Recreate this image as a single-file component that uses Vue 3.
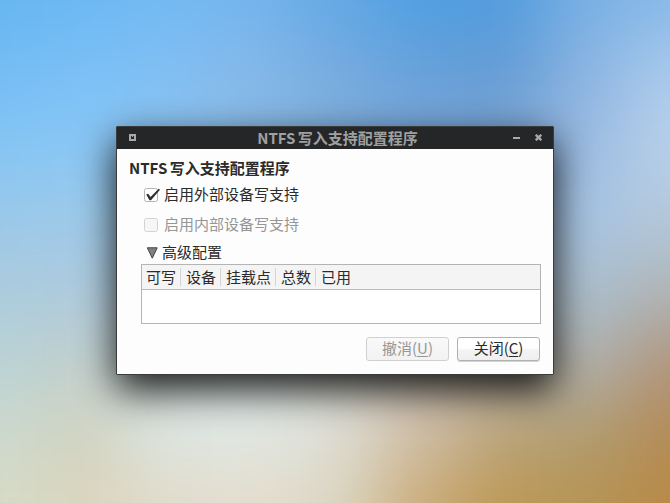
<script setup>
import { ref } from 'vue'

const external = ref(true)
const title = 'NTFS 写入支持配置程序'
const columns = ['可写', '设备', '挂载点', '总数', '已用']

// Wallpaper colour samples, blended together with a wide blur
const mesh = [
  ['#66b5f1', '#6cb8f3', '#72b9f3', '#74b4ec', '#64a8e5', '#4f9fe2', '#529cde', '#78b0e4', '#88b9e8'],
  ['#74bdf5', '#7bc0f7', '#82bff3', '#85b9ea', '#78acdf', '#68a1da', '#659cd4', '#8db5e2', '#accbed'],
  ['#84c5f4', '#88c7f6', '#8cc2ee', '#8ab8e2', '#80add9', '#78a5d6', '#7aa2d0', '#9cbce2', '#bbd2ea'],
  ['#9ac8ea', '#9ecaea', '#a0c6e2', '#9cbad8', '#94b0d0', '#94acd0', '#98b4d4', '#a8c5e4', '#b4c8db'],
  ['#abcbdd', '#adcade', '#b4cedc', '#b8cad8', '#b4c0cc', '#b0b8c0', '#acbcc8', '#a9bfce', '#b0b6b7'],
  ['#b9d3d6', '#c1cecb', '#d0dcda', '#dae2e2', '#d4d6d0', '#c8beb4', '#b8b0a4', '#afb0ae', '#b1957d'],
  ['#cdd9ce', '#d1d3c1', '#dde6e2', '#e2e9e6', '#dedfd6', '#d0bea8', '#b9a47c', '#b09c70', '#b48b57'],
  ['#d7dbc6', '#dbd5bc', '#e2dbca', '#e4dccb', '#dcd6c2', '#caac78', '#be9853', '#b69455', '#b98945']
]
const cells = mesh.flatMap((row, r) =>
  row.map((fill, c) => {
    const x = c === 0 ? -140 : c * 84 - 42
    const y = r === 0 ? -140 : r * 72 - 36
    const w = c === 0 ? 182 + 1 : c === 8 ? 180 : 85
    const h = r === 0 ? 176 + 1 : r === 7 ? 180 : 73
    return { fill, x, y, w, h }
  })
)
</script>

<template>
  <main class="desktop">
    <svg class="wallpaper" width="670" height="503" viewBox="0 0 670 503">
      <defs>
        <filter id="soften" filterUnits="userSpaceOnUse" x="-140" y="-140" width="950" height="790" color-interpolation-filters="sRGB">
          <feGaussianBlur stdDeviation="34" />
        </filter>
      </defs>
      <g filter="url(#soften)">
        <rect v-for="(cell, i) in cells" :key="i" :x="cell.x" :y="cell.y" :width="cell.w" :height="cell.h" :fill="cell.fill" />
      </g>
    </svg>

    <section class="window">
      <header class="titlebar">
        <svg class="menu-icon" width="7" height="7" viewBox="0 0 7 7"><path d="M0 0h7v7H0zM2 2v3h3V2H4v1H3V2z" fill="#a9a9a9" fill-rule="evenodd" /></svg>
        <span class="caption">{{ title }}</span>
        <svg class="min-icon" width="7" height="2" viewBox="0 0 7 2"><path d="M0 0h7v2H0z" fill="#a9a9a9" /></svg>
        <svg class="close-icon" width="7" height="7" viewBox="0 0 7 7"><path d="M.7 .7l5.6 5.6M6.3 .7L.7 6.3" stroke="#a9a9a9" stroke-width="2.3" /></svg>
      </header>

      <div class="content">
        <h1>{{ title }}</h1>
        <label class="check first">
          <input v-model="external" type="checkbox" />
          <span class="box">
            <svg v-if="external" class="tick" width="17" height="15" viewBox="0 0 17 15"><path d="M2.2 6.6l2-.8 2.3 3.3 8.2-8.3 1.3 1L7 12.2H5.5z" fill="#2f2f2f" /></svg>
          </span>
          <span>启用外部设备写支持</span>
        </label>
        <label class="check disabled">
          <input type="checkbox" disabled />
          <span class="box"></span>
          <span>启用内部设备写支持</span>
        </label>
        <div class="expander">
          <svg width="12" height="12" viewBox="0 0 12 12"><path d="M1.3.8h9.9L6.3 11.2z" fill="#808080" stroke="#444" /></svg>
          <span>高级配置</span>
        </div>
        <div class="table">
          <div class="thead">
            <span v-for="col in columns" :key="col" class="th">{{ col }}</span>
          </div>
        </div>
        <footer class="actions">
          <button disabled>撤消(<u>U</u>)</button>
          <button>关闭(<u>C</u>)</button>
        </footer>
      </div>
    </section>
  </main>
</template>

<style>
body {
  margin: 0;
  overflow: hidden;
}
</style>

<style scoped>
.desktop {
  position: relative;
  box-sizing: border-box;
  width: 670px;
  height: 503px;
  padding: 126px 116px 0;
  overflow: hidden;
  background: #a0c4e0;
  font: 15px/20px "Noto Sans CJK SC", sans-serif;
  color: #2b2b2b;
}
.wallpaper {
  position: absolute;
  inset: 0;
}
.window {
  position: relative;
  box-sizing: border-box;
  width: 438px;
  height: 249px;
  border: 1px solid #3a3b3b;
  border-radius: 1px;
  background: #fdfdfd;
  box-shadow: 0 15px 38px rgba(0, 0, 0, 0.88);
}
.titlebar {
  display: flex;
  align-items: center;
  height: 22px;
  padding: 0 11px 0 12px;
  background: #252627;
  color: #a0a0a0;
  font-weight: 700;
}
.caption {
  flex: 1;
  padding: 0 0 1px 26px;
  text-align: center;
  word-spacing: -1px;
}
.min-icon {
  margin-right: 15px;
}
.menu-icon,
.min-icon,
.close-icon {
  margin-bottom: 1px;
}
.content {
  display: flex;
  flex-direction: column;
  padding: 9px 12px 0;
}
h1 {
  margin: 0;
  font-size: 15px;
  line-height: 20px;
  word-spacing: -1px;
}
.check {
  display: flex;
  align-items: center;
  gap: 6px;
  margin: 10px 0 0 15px;
  height: 20px;
}
.check.first {
  margin-top: 6px;
}
.check input {
  display: none;
}
.box {
  position: relative;
  box-sizing: border-box;
  width: 14px;
  height: 14px;
  margin-top: 2px;
  border: 1px solid #b4b4b4;
  border-radius: 2.5px;
  background: #fff;
}
.tick {
  position: absolute;
  left: -1px;
  top: -1px;
}
.disabled {
  color: #969696;
}
.disabled .box {
  border-color: #d3d3d3;
  background: #f6f6f6;
}
.expander {
  display: flex;
  align-items: center;
  gap: 4px;
  height: 20px;
  margin: 8px 0 0 17px;
}
.expander svg {
  margin-top: 2px;
}
.table {
  box-sizing: border-box;
  height: 60px;
  margin: 2px 0 0 12px;
  border: 1px solid #b4b4b4;
  background: #fff;
}
.thead {
  display: flex;
  align-items: center;
  box-sizing: border-box;
  height: 25px;
  border-bottom: 1px solid #bcbcbc;
  background: #f4f4f4;
}
.th {
  height: 18px;
  padding: 0 4px 0 5px;
  border-right: 1px solid #d4d4d4;
  line-height: 18px;
}
.th:first-child {
  padding-left: 4px;
}
.th:last-child {
  border: 0;
}
.actions {
  display: flex;
  justify-content: flex-end;
  gap: 8px;
  padding-right: 1px;
  margin-top: 13px;
}
button {
  box-sizing: border-box;
  width: 83px;
  height: 24px;
  padding: 0 0 2px;
  border: 1px solid #b0b0b0;
  border-radius: 3px;
  background: linear-gradient(#fff 45%, #f4f4f4 55%, #efefef);
  box-shadow: 0 1px 0 #d4d4d4;
  color: #2b2b2b;
  font: inherit;
  line-height: 20px;
}
button:disabled {
  border-color: #d0d0d0;
  background: linear-gradient(#f9f9f9, #f2f2f2);
  box-shadow: none;
  color: #969696;
}
u {
  text-underline-offset: 2px;
  text-decoration-thickness: 1px;
}
</style>
